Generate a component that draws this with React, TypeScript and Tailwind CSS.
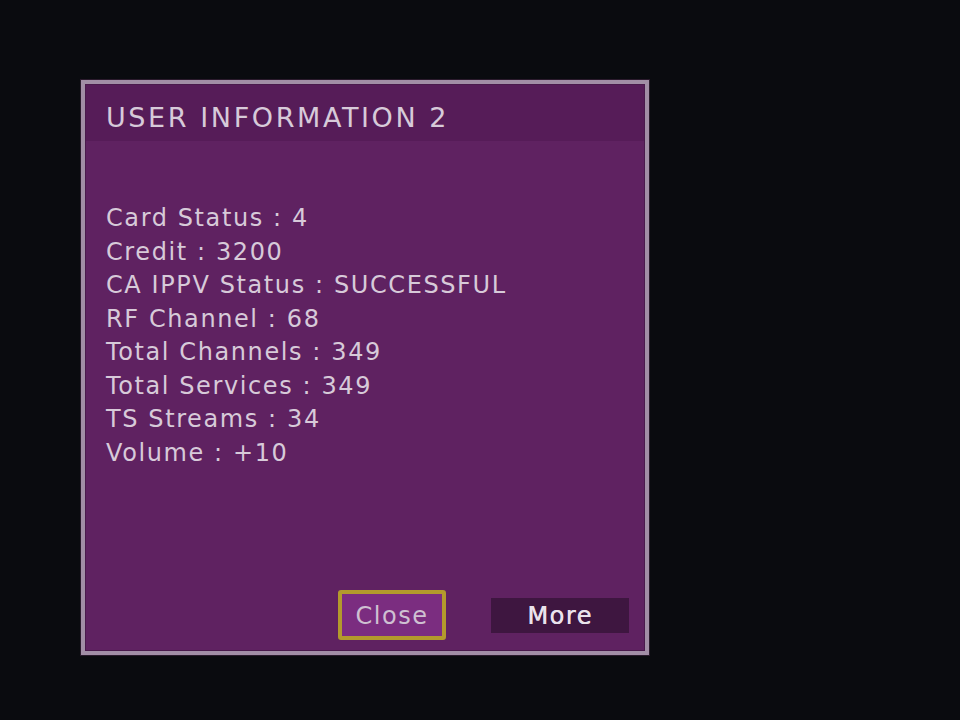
import React from 'react';

const ROWS: [string, string][] = [
  ['Card Status', '4'],
  ['Credit', '3200'],
  ['CA IPPV Status', 'SUCCESSFUL'],
  ['RF Channel', '68'],
  ['Total Channels', '349'],
  ['Total Services', '349'],
  ['TS Streams', '34'],
  ['Volume', '+10'],
];

const App: React.FC = () => {
  return (
    <div
      className="w-[960px] h-[720px] bg-[#0a0b0f] pl-[81px] pt-[80px]"
      style={{ fontFamily: '"DejaVu Sans", "Open Sans", sans-serif' }}
    >
      {/* Panel */}
      <div className="w-[568px] h-[575px] border-[4px] border-[#a28ea6] shadow-[0_0_0_1px_#2a1a2c] flex flex-col bg-[#5f2261]">
        <div className="flex flex-col flex-1 border border-[#4a1a4c]">
          {/* Header */}
          <div className="h-[56px] bg-[#561c58] flex items-center pl-[20px] pt-[8px]">
            <h1 className="text-[27px] tracking-[2.6px] text-[#d7cad9] leading-none">
              USER INFORMATION 2
            </h1>
          </div>

          {/* Info lines */}
          <div className="pt-[61px] pl-[20px] flex-1 text-[24px] leading-[33.5px] tracking-[1.6px] text-[#d7cad9]">
            {ROWS.map(([label, value]) => (
              <p key={label}>
                {label} : {value}
              </p>
            ))}
          </div>

          {/* Buttons */}
          <div className="flex items-center justify-end gap-[45px] pr-[15px] pb-[10px]">
            <button className="w-[108px] h-[50px] border-[4px] border-[#b39a2c] rounded-[3px] bg-[#7b2d80] pt-[2px] text-[24px] tracking-[1.5px] text-[#cfc0d2]">
              Close
            </button>
            <button className="w-[138px] h-[35px] bg-[#3e1640] text-[24px] tracking-[1.5px] text-[#eae2ec] [text-shadow:0.4px_0_0_#eae2ec]">
              More
            </button>
          </div>
        </div>
      </div>
    </div>
  );
};

export default App;
